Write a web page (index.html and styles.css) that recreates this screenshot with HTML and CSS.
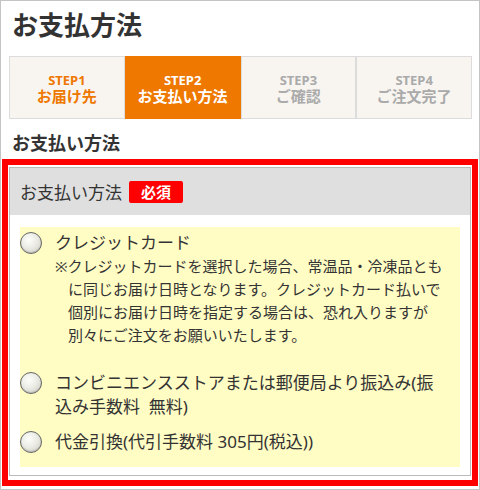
FILE: index.html
```html
<!DOCTYPE html>
<html lang="ja">
<head>
  <meta charset="UTF-8" />
  <meta name="viewport" content="width=device-width, initial-scale=1.0">
  <title>お支払方法</title>
  <link rel="stylesheet" href="styles.css">
</head>
<body>
<div class="page">
  <h1 class="page-title">お支払方法</h1>

  <!-- 手順 -->
  <ol class="steps">
    <li class="step done"><span class="step-num">STEP1</span><span class="step-name">お届け先</span></li>
    <li class="step current"><span class="step-num">STEP2</span><span class="step-name">お支払い方法</span></li>
    <li class="step"><span class="step-num">STEP3</span><span class="step-name">ご確認</span></li>
    <li class="step"><span class="step-num">STEP4</span><span class="step-name">ご注文完了</span></li>
  </ol>

  <h2 class="section-title">お支払い方法</h2>

  <div class="pay-box">
    <div class="pay-inner">
      <div class="pay-head">お支払い方法<span class="required">必須</span></div>
      <div class="pay-body">
        <ul class="pay-list">
          <li class="pay-option">
            <span class="radio"></span>
            <div class="pay-label">
              クレジットカード
              <p class="pay-note">※クレジットカードを選択した場合、常温品・冷凍品とも<br>に同じお届け日時となります。クレジットカード払いで<br>個別にお届け日時を指定する場合は、恐れ入りますが<br>別々にご注文をお願いいたします。</p>
            </div>
          </li>
          <li class="pay-option">
            <span class="radio"></span>
            <div class="pay-label">コンビニエンスストアまたは郵便局より振込み(振<br>込み手数料&nbsp; 無料)</div>
          </li>
          <li class="pay-option">
            <span class="radio"></span>
            <div class="pay-label">代金引換(代引手数料 305円(税込))</div>
          </li>
        </ul>
      </div>
    </div>
  </div>
</div>
</body>
</html>
```

FILE: styles.css
```css
body {
  margin: 0;
  background: #fff;
}

.page {
  box-sizing: border-box;
  height: 490px;
  border: 1px solid #c4c4c4;
  overflow: hidden;
  font-family: "Noto Sans", "Noto Sans CJK JP", sans-serif;
  color: #333;
}

.page-title {
  margin: 0;
  padding: 9px 0 0 11px;
  font-size: 26px;
  line-height: 31px;
  font-weight: bold;
}

/* 手順タブ */
.steps {
  display: grid;
  grid-template-columns: repeat(4, 1fr);
  margin: 15px 7px 0 8px;
  padding: 0;
  list-style: none;
}

.step {
  box-sizing: border-box;
  height: 63px;
  padding-top: 1px;
  border: 1px solid #dcdcdc;
  background: #f8f5f1;
  display: flex;
  flex-direction: column;
  justify-content: center;
  align-items: center;
  font-weight: bold;
  color: #aaa;
}

.step-num {
  font-size: 13px;
  line-height: 16px;
}

.step-name {
  font-size: 15px;
  line-height: 16px;
}

.step.done {
  color: #ee7800;
}

.step.current {
  background: #ee7800;
  border-color: #ee7800;
  color: #fff;
}

.section-title {
  margin: 12px 0 0 11px;
  font-size: 18px;
  line-height: 24px;
  font-weight: bold;
}

/* お支払い方法の選択欄 */
.pay-box {
  margin: 4px 1px 0;
  border: 6px solid #f00;
  padding: 2px 1px 4px;
}

.pay-inner {
  border: 1px solid #bbb;
}

.pay-head {
  height: 47px;
  background: #dfdfdf;
  display: flex;
  align-items: center;
  gap: 7px;
  padding-left: 10px;
  font-size: 17px;
}

.required {
  background: #f00;
  color: #fff;
  font-size: 15px;
  line-height: 22px;
  font-weight: bold;
  padding: 0 12px;
  border-radius: 2px;
}

.pay-body {
  padding: 12px 10px 8px;
}

.pay-list {
  margin: 0;
  padding: 4px 10px 13px 0;
  list-style: none;
  background: #fffcc4;
  display: flex;
  flex-direction: column;
  gap: 11px;
}

.pay-option {
  display: flex;
  gap: 13px;
  font-size: 17px;
  line-height: 24px;
}

.radio {
  flex: none;
  box-sizing: border-box;
  width: 22px;
  height: 22px;
  margin-top: 1px;
  border: 1px solid #666;
  border-radius: 50%;
  background: radial-gradient(circle at 40% 35%, #fdfdfb 0%, #ecece6 45%, #c9c9c0 100%);
  box-shadow: inset 0 -1px 1px rgba(0, 0, 0, 0.15);
}

.pay-note {
  margin: 0 0 13px;
  padding-left: 13px;
  text-indent: -13px;
  font-size: 15px;
  line-height: 23px;
}
```
